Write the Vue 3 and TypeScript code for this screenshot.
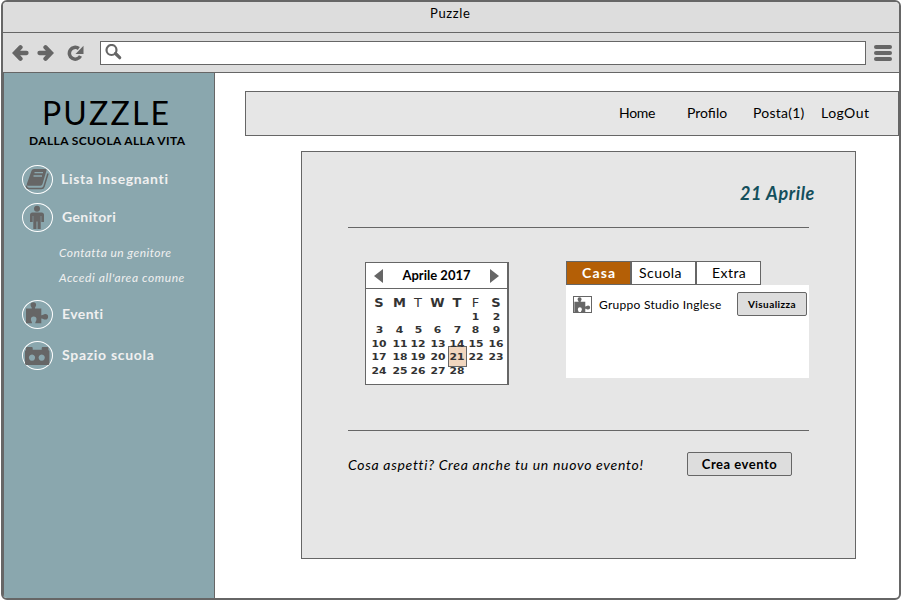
<script setup lang="ts">
import { ref } from 'vue'

const links = ['Home', 'Profilo', 'Posta(1)', 'LogOut']
const weekdays = ['S', 'M', 'T', 'W', 'T', 'F', 'S']
const weeks: (number | null)[][] = [
  [null, null, null, null, null, 1, 2],
  [3, 4, 5, 6, 7, 8, 9],
  [10, 11, 12, 13, 14, 15, 16],
  [17, 18, 19, 20, 21, 22, 23],
  [24, 25, 26, 27, 28, null, null],
]
const selected = ref(21)
const tabs = ['Casa', 'Scuola', 'Extra']
const active = ref('Casa')
const piece =
  'M4 8.500H9.800C10.200 7.200 8.500 6.800 8.500 5a2.800 2.800 0 0 1 5.600 0C14.100 6.800 12.600 7.200 13 8.500H19.300V15.200C20.600 15.600 21.200 14 23.300 14a2.800 2.800 0 0 1 0 5.600C21.200 19.600 20.600 18.200 19.300 18.600V23.300H13.300C13 22 14.500 21.500 14.500 19.300a2.800 2.800 0 0 0-5.600 0C8.900 21.500 10.300 22 10 23.300H4Z'
</script>

<template>
  <div class="window">
    <header class="titlebar">Puzzle</header>
    <div class="toolbar">
      <svg class="arrow back" viewBox="0 0 17 16"><path d="M8.500 2.300 3 8l5.500 5.700M3.500 8H14.500" /></svg>
      <svg class="arrow forward" viewBox="0 0 17 16"><path d="M8.500 2.300 14 8l-5.500 5.700M13.500 8H2.500" /></svg>
      <svg class="reload" viewBox="0 0 17 16">
        <path class="ring" d="M11.800 3.500A5.900 5.900 0 1 0 13.500 11" />
        <path class="tip" d="M16.500 .8V9H8.500Z" />
      </svg>
      <div class="address">
        <svg class="lens" viewBox="0 0 17 16">
          <circle cx="6.500" cy="6" r="5" /><path d="M10.500 9.500l4.200 4.200" />
        </svg>
      </div>
      <div class="menu"><i></i><i></i><i></i></div>
    </div>
    <div class="body">
      <aside class="sidebar">
        <h1>PUZZLE</h1>
        <p class="motto">DALLA SCUOLA ALLA VITA</p>
        <a class="entry teachers">
          <span class="badge">
            <svg viewBox="0 0 31 29">
              <path class="dark" d="M12 4h11.500q1.500 0 1 1.500L20.500 19q-.5 1.700-2 1.700H6.500q-2.200 0-1.600-2L9.500 5.700Q10 4 12 4z" />
              <path class="pages" d="M26 8.500 22 21.500q-.6 2-2.600 2H7q-2.700 0-2.600-3" />
              <path class="gap" d="M12.500 7.700h8.500M11.500 11h8.500" />
            </svg>
          </span>
          <span>Lista Insegnanti</span>
        </a>
        <a class="entry parents">
          <span class="badge">
            <svg viewBox="0 0 31 29">
              <circle class="dark" cx="15" cy="5.800" r="3" />
              <path class="dark" d="M10.500 9.500h9q2.500 0 2.500 2.500v7h-2.700v-6h-.6v13h-3.200v-7.500h-1V26h-3.200V13h-.6v6H8v-7q0-2.500 2.500-2.500z" />
            </svg>
          </span>
          <span>Genitori</span>
        </a>
        <a class="sub first">Contatta un genitore</a>
        <a class="sub second">Accedi all'area comune</a>
        <a class="entry events">
          <span class="badge">
            <svg viewBox="0 0 31 29"><path class="dark" :d="piece" /></svg>
          </span>
          <span>Eventi</span>
        </a>
        <a class="entry school">
          <span class="badge">
            <svg viewBox="0 0 31 29">
              <path class="dark" fill-rule="evenodd" d="M5 6h4.700q1 0 1 1v1.700h9V7q0-1 1-1h4.700q1 0 1 1v2l1 1v12.500q0 1.500-1.500 1.500H4.500Q3 24 3 22.500V10l1-1V7q0-1 1-1zM10 13.500a3.100 3.100 0 1 0 .01 0zM19.700 13.500a3.100 3.100 0 1 0 .01 0z" />
            </svg>
          </span>
          <span>Spazio scuola</span>
        </a>
      </aside>
      <main class="page">
        <nav class="nav">
          <a v-for="link in links" :key="link" :class="link.slice(0, 4).toLowerCase()">{{ link }}</a>
        </nav>
        <section class="panel">
          <h2 class="date">21 Aprile</h2>
          <div class="middle">
            <div class="calendar">
              <div class="month">
                <svg viewBox="0 0 9 14"><path d="M9 0v14L0 7z" /></svg>
                <span>Aprile 2017</span>
                <svg viewBox="0 0 9 14"><path d="M0 0v14l9-7z" /></svg>
              </div>
              <div class="days heads">
                <span v-for="(d, i) in weekdays" :key="i" :class="{ light: i === 2 || i === 5 }">{{ d }}</span>
              </div>
              <div v-for="(week, w) in weeks" :key="w" class="days">
                <span v-for="(d, i) in week" :key="i" :class="{ today: d === selected }" @click="d && (selected = d)"><b>{{ d }}</b></span>
              </div>
            </div>
            <div class="groups">
              <div class="tabs">
                <button v-for="tab in tabs" :key="tab" :class="[tab.toLowerCase(), { active: tab === active }]" @click="active = tab">{{ tab }}</button>
              </div>
              <div class="list">
                <svg class="piece" viewBox="3.500 2 23.800 21"><path :d="piece" /></svg>
                <span class="group">Gruppo Studio Inglese</span>
                <button class="view">Visualizza</button>
              </div>
            </div>
          </div>
          <div class="prompt">
            <span class="ask">Cosa aspetti? Crea anche tu un nuovo evento!</span>
            <button class="create">Crea evento</button>
          </div>
        </section>
      </main>
    </div>
  </div>
</template>

<style>
body { background: #fff; }
</style>

<style scoped>
* { box-sizing: border-box; margin: 0; padding: 0; }
.window { width: 900px; height: 600px; margin-left: 1px; border: 2px solid #666; border-radius: 6px; overflow: hidden; font-family: Lato, "Liberation Sans", sans-serif; font-size: 14px; color: #000; background: #fff; white-space: nowrap; }
button { font: inherit; color: inherit; background: none; border: 0; }
svg { display: block; flex: none; }
.titlebar { height: 31px; padding-left: 427px; border-bottom: 1px solid #666; background: #ddd; font-size: 13px; line-height: 23px; letter-spacing: .65px; }
.toolbar { display: flex; align-items: center; height: 40px; padding: 0 7px 0 9px; border-bottom: 1px solid #666; background: #ddd; }
.arrow { width: 17px; height: 16px; fill: none; stroke: #666; stroke-width: 4.300; stroke-linecap: round; stroke-linejoin: miter; }
.forward { margin-left: 8px; }
.reload { width: 17px; height: 16px; margin-left: 13px; }
.ring { fill: none; stroke: #666; stroke-width: 3.500; }
.tip { fill: #666; }
.address { display: flex; align-items: center; width: 766px; height: 24px; margin-left: 16px; padding-left: 4px; border: 1px solid #666; background: #fff; }
.lens { width: 17px; height: 16px; margin-top: -1px; fill: none; stroke: #666; stroke-width: 2.200; stroke-linecap: round; }
.lens path { stroke-width: 3.200; }
.menu { display: grid; gap: 2px; width: 18px; margin-left: 8px; }
.menu i { height: 4px; border-radius: 2px; background: #666; }
.body { display: flex; height: 525px; }
.sidebar { width: 212px; padding-left: 18px; border-left: 1px solid #666; border-right: 1px solid #666; background: #8aa7ae; color: #f0f0f0; }
h1 { height: 40px; margin-top: 20px; padding-left: 20px; font-size: 32px; font-weight: 400; line-height: 40px; letter-spacing: 2.150px; color: #000; }
.motto { height: 16px; padding-left: 7px; font-size: 12px; font-weight: 700; line-height: 16px; letter-spacing: .38px; color: #000; }
.entry { display: flex; align-items: center; gap: 9px; height: 29px; font-weight: 700; }
.entry > span:last-child { margin-top: -2px; letter-spacing: .4px; }
.badge { width: 31px; height: 29px; border: 1px solid #fff; border-radius: 50%; }
.badge svg { width: 31px; height: 29px; margin: -1px; }
.dark { fill: #666; }
.pages { fill: none; stroke: #666; stroke-width: 1.500; }
.gap { fill: none; stroke: #8aa7ae; stroke-width: 1.300; }
.teachers { margin-top: 16px; gap: 8px; }
.teachers > span:last-child { letter-spacing: .65px; }
.parents { margin-top: 9px; }
.sub { display: block; height: 25px; padding-left: 37px; font-size: 12px; font-style: italic; line-height: 25px; letter-spacing: .45px; }
.second { letter-spacing: .57px; }
.first { margin-top: 8px; }
.events { margin-top: 10px; }
.school { margin-top: 12px; }
.school > span:last-child { letter-spacing: .7px; }
.page { flex: 1; padding: 18px 0 0 30px; }
.nav { display: flex; height: 45px; border: 1px solid #666; background: #e6e6e6; line-height: 42px; }
.home { width: 68px; margin-left: 373px; letter-spacing: -.3px; }
.prof { width: 66px; }
.post { width: 68px; letter-spacing: .25px; }
.logo { letter-spacing: .45px; }
.panel { width: 555px; height: 408px; margin: 15px 0 0 56px; padding: 0 46px; border: 1px solid #666; background: #e6e6e6; }
.date { height: 76px; padding: 29px 0 0 392px; border-bottom: 1px solid #666; font-size: 18px; font-style: italic; font-weight: 700; line-height: 24px; letter-spacing: .6px; color: #134f5c; }
.middle { display: flex; height: 203px; border-bottom: 1px solid #666; }
.panel > * { width: 461px; }
.calendar { width: 144px; height: 123px; margin: 34px 0 0 17px; border: 1px solid #666; border-right-width: 2px; background: #fff; }
.month { display: flex; align-items: center; justify-content: space-between; height: 26px; padding: 0 8px; border-bottom: 1px solid #666; font-size: 13px; font-weight: 700; }
.month span { margin-top: -2px; }
.month svg { width: 9px; height: 14px; fill: #666; }
.days { display: grid; grid-template-columns: 22px 19px 18px 21px 18px 19px 22px; align-items: center; justify-items: center; height: 13.500px; padding-left: 2px; font: bold 10px/13px "DejaVu Sans", sans-serif; color: #333; }
.days span { line-height: 12px; }
.days b { display: inline-block; transform: scale(1.08, .92); }
.heads { height: 21px; padding-top: 6px; font-size: 13px; }
.days .light { font-weight: 400; }
.today { display: grid; place-items: center; width: 19px; height: 21px; margin: -5px 0 -4px; border: 1px solid #666; background: rgba(225, 165, 110, .45); }
.groups { width: 243px; margin: 33px 0 0 57px; }
.tabs { display: flex; height: 24px; }
.tabs button { width: 65px; padding-left: 15px; border: 1px solid #666; background: #fff; text-align: left; line-height: 22px; letter-spacing: .45px; }
.tabs .scuola { padding-left: 7px; }
.tabs .active { background: #b45f06; color: #fff; font-weight: 700; letter-spacing: 1.200px; }
.list { display: flex; align-items: flex-start; height: 93px; padding: 7px 2px 0 7px; background: #fff; }
.piece { width: 19px; height: 17px; margin-top: 4px; border: 1px solid #666; fill: #666; }
.group { margin-left: 7px; font-size: 12px; line-height: 25px; letter-spacing: .28px; }
.view { width: 70px; height: 24px; margin-left: auto; border: 1px solid #666; border-radius: 2px; background: #ddd; font-size: 10px; font-weight: 700; line-height: 20px; letter-spacing: .42px; }
.prompt { display: flex; padding-top: 21px; }
.ask { font-style: italic; line-height: 25px; letter-spacing: .7px; }
.create { width: 105px; height: 24px; margin-left: auto; margin-right: 17px; border: 1px solid #666; border-radius: 2px; background: #ddd; font-size: 13px; font-weight: 700; line-height: 21px; letter-spacing: .5px; }
</style>
